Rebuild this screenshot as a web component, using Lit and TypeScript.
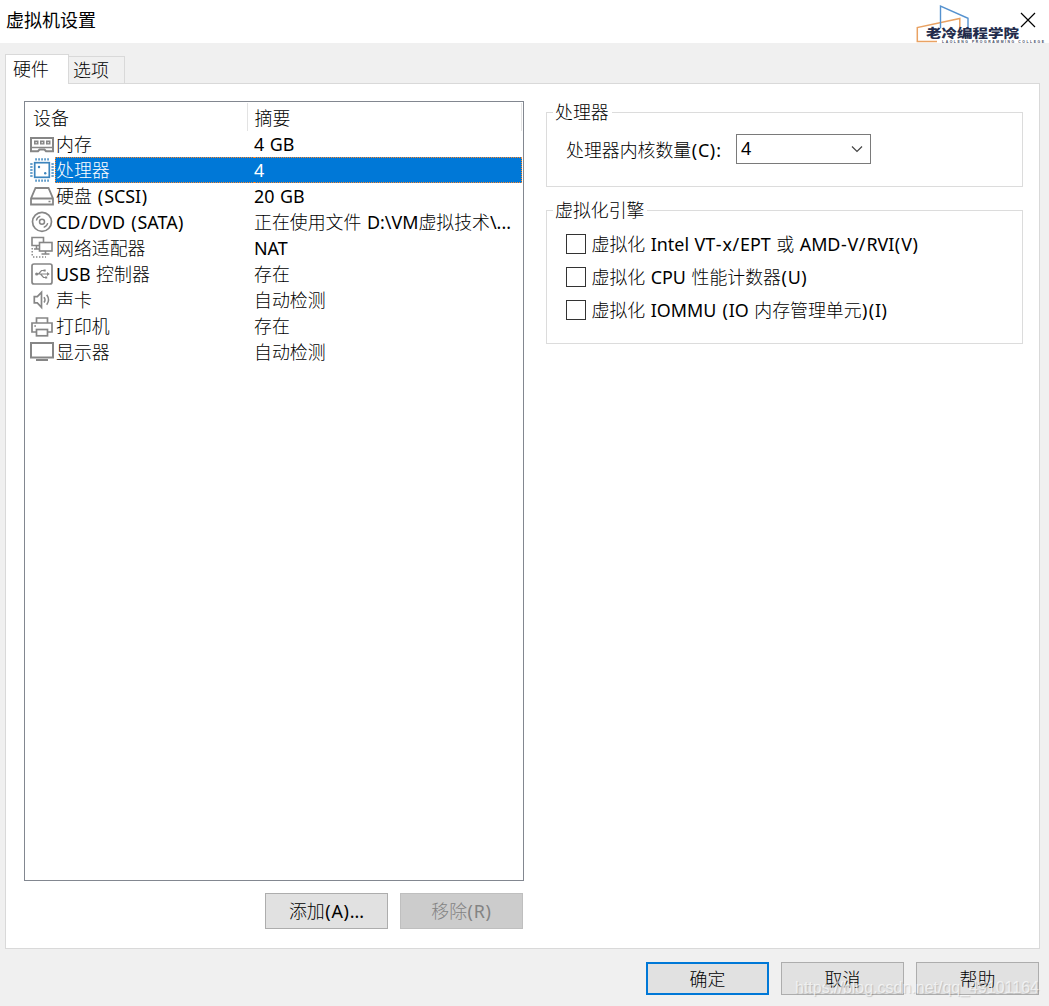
import { LitElement, html, css, svg, type TemplateResult } from "lit";
import { customElement, property, state } from "lit/decorators.js";
import { classMap } from "lit/directives/class-map.js";

const LATIN_RUN = /([\x20-\x7e]+)/;
const WIDE_MARKS = /([()/\-]+)/;

/** Wraps Latin runs, and the wide marks inside them, so each can carry its own spacing. */
const mixed = (text: string) =>
  text
    .split(LATIN_RUN)
    .filter((part) => part !== "")
    .map((part) =>
      LATIN_RUN.test(part)
        ? html`<span class="lat"
            >${part
              .split(WIDE_MARKS)
              .filter((p) => p !== "")
              .map((p) => (WIDE_MARKS.test(p) ? html`<span class="mark">${p}</span>` : p))}</span
          >`
        : html`${part}`
    );

const mixedStyles = css`
  .lat {
    font-family: "Noto Sans", Tahoma, sans-serif;
    font-weight: 400;
    word-spacing: 0.9px;
    white-space: pre;
  }
  .mark {
    letter-spacing: 1.2px;
    margin: 0 -0.3px 0 0.5px;
  }
`;

interface Device {
  name: string;
  summary: string;
  icon: TemplateResult;
}

const G = "#868686";
const B = "#3d85bd";

const icons = {
  memory: svg`
    <path d="M1 6h22v13.200h-7l-1.500-1.700h-5L8 19.200H1z" fill="none" stroke=${G} stroke-width="2"/>
    <path d="M4 8.500h4.500v4H4zM10 8.500h4.500v4H10zM16 8.500h4.500v4H16z" fill=${G}/>
    <path d="M5.500 10h1.500v1.200H5.500zM11.500 10h1.500v1.200h-1.500zM17.500 10h1.500v1.200h-1.500z" fill="#ddd"/>
    <path d="M1 15.500h22" stroke=${G} stroke-width="1.500"/>`,
  cpu: svg`
    <rect x="4.700" y="4.700" width="14.600" height="14.600" fill="#fff" stroke=${B} stroke-width="1.700"/>
    <path d="M5.300 1.400h14M5.300 22.600h14M1.400 5.300v14M22.600 5.300v14" stroke=${B} stroke-width="2.400" stroke-dasharray="1.500 1.500"/>
    <circle cx="9" cy="9" r="1.200" fill=${B}/>
    <circle cx="15.200" cy="15.200" r="1.200" fill=${B}/>`,
  disk: svg`
    <path d="M5.500 4h13L23 14.500v6H1v-6zM1 14.500h22" fill="none" stroke=${G} stroke-width="1.800"/>
    <path d="M18.500 17.500h2" stroke=${G} stroke-width="1.500"/>`,
  disc: svg`
    <circle cx="12" cy="11.800" r="9.500" fill="none" stroke=${G} stroke-width="1.700"/>
    <circle cx="12" cy="11.800" r="2.500" fill="none" stroke=${G} stroke-width="1.500"/>
    <path d="M6.300 10.500a6 6 0 0 1 4-4.300M17.700 13.100a6 6 0 0 1-4 4.300" fill="none" stroke=${G} stroke-width="1.300"/>`,
  network: svg`
    <path d="M9 9.500H2v-8h11.500V6" fill="none" stroke=${G} stroke-width="1.600"/>
    <path d="M6.500 10v3M4 13h6" stroke=${G} stroke-width="1.600"/>
    <rect x="9.500" y="6.500" width="12.500" height="8.500" fill="#fff" stroke=${G} stroke-width="1.600"/>
    <path d="M15.500 15v3M11.500 18h8" stroke=${G} stroke-width="1.600"/>
    <path d="M2.200 12v9M3 21h13" stroke=${G} stroke-width="1.400" stroke-dasharray="1.400 1.600"/>`,
  usb: svg`
    <rect x="2" y="2" width="20" height="20" rx="2" fill="none" stroke=${G} stroke-width="1.700"/>
    <path d="M6 12h12M8.500 12l3-3.500h2.500M10.500 12l3 3.500h2" fill="none" stroke=${G} stroke-width="1.200"/>
    <circle cx="6.700" cy="12" r="1.600" fill=${G}/>
    <path d="M17 10l2.800 2-2.800 2zM13.500 7.400h2.200v2.200h-2.200zM15 14.400h2.200v2.200H15z" fill=${G}/>`,
  sound: svg`
    <path d="M4.300 8.700h3L11.500 4.300v15l-4.200-4.400h-3z" fill="none" stroke=${G} stroke-width="1.700"/>
    <path d="M14 9.100q2 2.700 0 5.400M16.700 6.800q3.600 5 0 10" fill="none" stroke=${G} stroke-width="1.500"/>`,
  printer: svg`
    <path d="M6.500 8.500V4h11v4.500M6 18H2V9h20v9h-4" fill="none" stroke=${G} stroke-width="1.700"/>
    <rect x="6.500" y="15.500" width="11" height="6.300" fill="none" stroke=${G} stroke-width="1.700"/>
    <path d="M4.300 12h1.700" stroke=${G} stroke-width="1.300"/>`,
  display: svg`
    <rect x="1" y="3" width="22" height="14.500" fill="none" stroke=${G} stroke-width="2"/>
    <path d="M6 20h12" stroke=${G} stroke-width="2"/>`,
};

const DEVICES: Device[] = [
  { name: "内存", summary: "4 GB", icon: icons.memory },
  { name: "处理器", summary: "4", icon: icons.cpu },
  { name: "硬盘 (SCSI)", summary: "20 GB", icon: icons.disk },
  { name: "CD/DVD (SATA)", summary: "正在使用文件 D:\\VM虚拟技术\\...", icon: icons.disc },
  { name: "网络适配器", summary: "NAT", icon: icons.network },
  { name: "USB 控制器", summary: "存在", icon: icons.usb },
  { name: "声卡", summary: "自动检测", icon: icons.sound },
  { name: "打印机", summary: "存在", icon: icons.printer },
  { name: "显示器", summary: "自动检测", icon: icons.display },
];

@customElement("dialog-button")
class DialogButton extends LitElement {
  @property() label = "";
  @property({ type: Boolean }) primary = false;
  @property({ type: Boolean }) disabled = false;

  static styles = [
    mixedStyles,
    css`
      :host {
        display: block;
        width: 123px;
      }
      button {
        display: flex;
        align-items: center;
        justify-content: center;
        width: 100%;
        height: 100%;
        padding: 0 0 2px;
        border: 1px solid #adadad;
        border-radius: 0;
        background: #e1e1e1;
        color: #000;
        font: inherit;
      }
      .primary {
        border: 2px solid #0078d7;
      }
      button:disabled {
        background: #ccc;
        border-color: #bfbfbf;
        color: #838383;
      }
    `,
  ];

  render() {
    return html`<button class=${classMap({ primary: this.primary })} ?disabled=${this.disabled}>
      <span>${mixed(this.label)}</span>
    </button>`;
  }
}

@customElement("device-list")
class DeviceList extends LitElement {
  @state() private selected = 1;

  static styles = [
    mixedStyles,
    css`
      :host {
        display: block;
        box-sizing: border-box;
        width: 500px;
        height: 780px;
        border: 1px solid #828790;
        background: #fff;
      }
      .head {
        display: grid;
        grid-template-columns: 223px 274px;
        height: 29px;
        padding-top: 1px;
        box-sizing: border-box;
        line-height: 28px;
      }
      .head span {
        border-right: 1px solid #e3e3e3;
        padding-left: 8px;
      }
      .head span + span {
        padding-left: 6.500px;
      }
      .row {
        display: grid;
        grid-template-columns: 30px 199px 1fr;
        height: 26px;
        line-height: 24px;
        padding-right: 1px;
      }
      .row svg {
        width: 24px;
        height: 24px;
        margin: 1px 0 0 5px;
      }
      .name {
        padding-left: 1px;
      }
      .summary {
        white-space: nowrap;
      }
      .selected .name,
      .selected .summary {
        background: #0078d7;
        color: #fff;
        border: 1px dotted #ff8728;
        border-left: 0;
        line-height: 22px;
      }
      .selected .name {
        border-left: 1px dotted #ff8728;
        padding-left: 0;
        border-right: 0;
      }
    `,
  ];

  render() {
    return html`
      <div class="head"><span>设备</span><span>摘要</span></div>
      ${DEVICES.map(
        (d, i) => html`<div
          class=${classMap({ row: true, selected: i === this.selected })}
          @click=${() => (this.selected = i)}
        >
          <svg viewBox="0 0 24 24">${d.icon}</svg>
          <div class="name">${mixed(d.name)}</div>
          <div class="summary">${mixed(d.summary)}</div>
        </div>`
      )}
    `;
  }
}

@customElement("brand-logo")
class BrandLogo extends LitElement {
  static styles = css`
    :host {
      display: block;
      width: 132px;
      height: 44px;
    }
    svg {
      display: block;
      overflow: visible;
    }
    .cn {
      font: 900 12.400px "Noto Sans CJK SC", sans-serif;
      fill: #232c4c;
    }
    .en {
      font: 700 3.400px "Liberation Sans", sans-serif;
      fill: #414960;
    }
  `;
  render() {
    return html`<svg width="132" height="44" viewBox="914 0 132 44">
      <path d="M937 41.500h-19.700V27.500L959.800 18.500V28" fill="none" stroke="#e9a263" stroke-width="1.500" />
      <path d="M940.500 28V6l27.500 12.300V28" fill="none" stroke="#5592cf" stroke-width="1.400" />
      <text class="cn" x="926" y="38.300" textLength="93" lengthAdjust="spacingAndGlyphs">老冷编程学院</text>
      <text class="en" x="942" y="43.300" textLength="102">LAOLENG PROGRAMMING COLLEGE</text>
    </svg>`;
  }
}

@customElement("app-root")
class AppRoot extends LitElement {
  static styles = [
    mixedStyles,
    css`
      :host {
        display: block;
        position: relative;
        width: 1049px;
        height: 1006px;
        overflow: hidden;
        background: #f0f0f0;
        color: #000;
        font: 300 17.900px "Noto Sans CJK SC", sans-serif;
        line-height: 26px;
      }
      .window {
        display: flex;
        flex-direction: column;
        height: 100%;
      }
      .titlebar {
        display: flex;
        justify-content: space-between;
        height: 43px;
        background: #fff;
        flex: none;
      }
      .title {
        padding-left: 6px;
        font-size: 18px;
        font-weight: 400;
        line-height: 38px;
      }
      .corner {
        display: flex;
        width: 135px;
      }
      .corner brand-logo {
        flex: none;
        z-index: 1;
      }
      .close {
        flex: none;
        width: 16px;
        height: 16px;
        margin: 12px 0 0 -26.500px;
        z-index: 2;
      }
      .tabs {
        display: flex;
        align-items: flex-end;
        height: 41px;
        padding-left: 5px;
        flex: none;
        margin-bottom: -1px;
        z-index: 1;
      }
      .tab {
        box-sizing: border-box;
        width: 56px;
        height: 28px;
        border: 1px solid #d9d9d9;
        border-left: 0;
        padding-left: 4px;
        line-height: 25px;
      }
      .tab.active {
        width: 64px;
        height: 30px;
        padding-left: 7px;
        border-left: 1px solid #d9d9d9;
        border-bottom: 0;
        background: #fff;
        line-height: 26px;
      }
      .panel {
        display: flex;
        box-sizing: border-box;
        gap: 22px;
        height: 866px;
        margin: 0 9px 0 5px;
        padding: 17px 16px 0 18px;
        border: 1px solid #d9d9d9;
        background: #fff;
        flex: none;
      }
      .left {
        display: flex;
        flex-direction: column;
        width: 500px;
        gap: 12px;
      }
      .list-actions {
        display: flex;
        justify-content: flex-end;
        gap: 12px;
        height: 36px;
        padding-right: 1px;
      }
      .right {
        display: flex;
        flex-direction: column;
        flex: 1;
        gap: 23px;
        padding-top: 11px;
      }
      .group {
        box-sizing: border-box;
        width: 477px;
        border: 1px solid #dcdcdc;
        padding-left: 19px;
      }
      .group.cores {
        height: 75px;
      }
      .group.virt {
        height: 134px;
      }
      .legend {
        width: fit-content;
        height: 26px;
        margin: -13px 0 0 -13px;
        padding: 0 3px 0 2px;
        background: #fff;
        line-height: 23px;
      }
      .field {
        display: flex;
        align-items: center;
        margin-top: 8px;
        height: 30px;
      }
      .field label {
        width: 170px;
        padding-top: 1px;
      }
      .select {
        display: flex;
        box-sizing: border-box;
        align-items: center;
        justify-content: space-between;
        width: 135px;
        height: 30px;
        padding: 0 7px 2px 4px;
        border: 1px solid #7a7a7a;
      }
      .select svg {
        width: 12px;
        height: 8px;
        margin-top: 2px;
      }
      .checks {
        display: flex;
        flex-direction: column;
        gap: 7px;
        margin-top: 6px;
      }
      .check {
        display: flex;
        align-items: center;
        gap: 5.500px;
        height: 26px;
        white-space: nowrap;
      }
      .box {
        box-sizing: border-box;
        width: 20px;
        height: 20px;
        margin-top: 1px;
        border: 1px solid #333;
        background: #fff;
      }
      .footer {
        display: flex;
        justify-content: flex-end;
        gap: 12px;
        height: 33px;
        margin-top: 13px;
        padding-right: 10px;
      }
      .watermark {
        position: absolute;
        right: 0;
        bottom: 0;
        width: 260px;
        height: 32px;
        pointer-events: none;
      }
      .watermark text {
        font: 400 16px "Liberation Sans", sans-serif;
        fill: #fff;
        fill-opacity: 0.65;
        text-shadow: 1px 1px 1px rgba(0, 0, 0, 0.25);
      }
    `,
  ];

  render() {
    return html`
      <div class="window">
        <div class="titlebar">
          <div class="title">虚拟机设置</div>
          <div class="corner">
            <brand-logo></brand-logo>
            <svg class="close" viewBox="0 0 16 16">
              <path d="M1 1l14 14M15 1L1 15" stroke="#000" stroke-width="1.200" />
            </svg>
          </div>
        </div>
        <div class="tabs">
          <div class="tab active">硬件</div>
          <div class="tab">选项</div>
        </div>
        <div class="panel">
          <div class="left">
            <device-list></device-list>
            <div class="list-actions">
              <dialog-button label="添加(A)..."></dialog-button>
              <dialog-button label="移除(R)" disabled></dialog-button>
            </div>
          </div>
          <div class="right">
            <div class="group cores">
              <div class="legend">处理器</div>
              <div class="field">
                <label>${mixed("处理器内核数量(C):")}</label>
                <div class="select">
                  ${mixed("4")}
                  <svg viewBox="0 0 12 8">
                    <path d="M1 1.500l5 5 5-5" fill="none" stroke="#444" stroke-width="1.200" />
                  </svg>
                </div>
              </div>
            </div>
            <div class="group virt">
              <div class="legend">虚拟化引擎</div>
              <div class="checks">
                ${[
                  "虚拟化 Intel VT-x/EPT 或 AMD-V/RVI(V)",
                  "虚拟化 CPU 性能计数器(U)",
                  "虚拟化 IOMMU (IO 内存管理单元)(I)",
                ].map((t) => html`<div class="check"><span class="box"></span><span>${mixed(t)}</span></div>`)}
              </div>
            </div>
          </div>
        </div>
        <div class="footer">
          <dialog-button label="确定" primary></dialog-button>
          <dialog-button label="取消"></dialog-button>
          <dialog-button label="帮助"></dialog-button>
        </div>
      </div>
      <svg class="watermark" viewBox="0 0 260 32">
        <text x="6" y="19" textLength="244">https://blog.csdn.net/qq_49101164</text>
      </svg>
    `;
  }
}
